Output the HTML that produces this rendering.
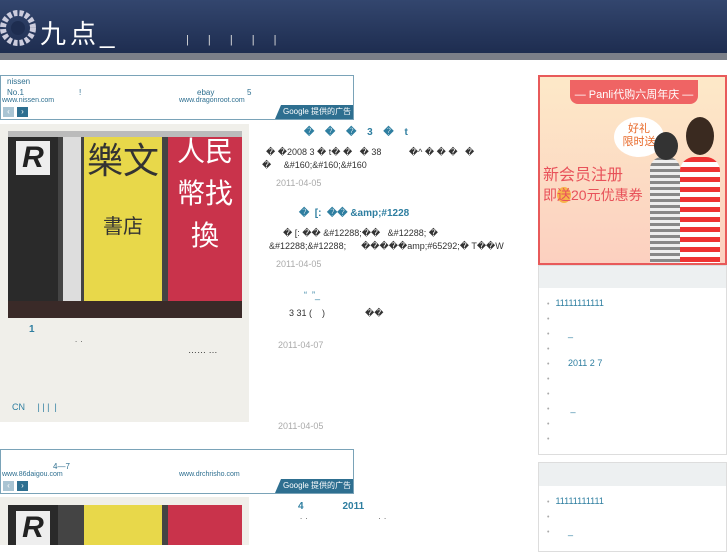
<!DOCTYPE html>
<html><head><meta charset="utf-8"><style>
*{margin:0;padding:0;box-sizing:border-box}
body{width:727px;height:545px;overflow:hidden;background:#fff;font-family:"Liberation Sans","Noto Sans CJK SC",sans-serif;font-size:9px;color:#333;position:relative}
.a{position:absolute}
.hdr{left:0;top:0;width:727px;height:53px;background:linear-gradient(#33466e,#1e2d50)}
.strip{left:0;top:53px;width:727px;height:7px;background:#7b7f88}
.ad{left:0;width:354px;height:45px;border:1px solid #7aa3b8;background:#fff}
.ad span{position:absolute;font-size:8px;color:#2e6f90}
.g{position:absolute;right:0;bottom:0;width:78px;height:14px;background:#2e6f90;color:#fff;font-size:8px;padding-left:8px;line-height:14px;white-space:nowrap;overflow:hidden;clip-path:polygon(6px 0,100% 0,100% 100%,0 100%)}
.nb{position:absolute;bottom:2px;width:11px;height:10px;font-size:8px;line-height:10px;text-align:center;color:#fff}
.box{left:0;width:249px;background:#f0efea}
.photo{left:8px;width:234px;background:#444;overflow:hidden}
.t{color:#2e7ea0;font-weight:bold;font-size:10px}
.d{color:#aaa;font-size:9px}
.side{left:538px;width:189px;border:1px solid #ddd;background:#fff}
.sh{height:22px;background:#edf0f1}
.li{position:absolute;left:8px;font-size:9px;color:#2e7ea0}
.li:before{content:"•";color:#aaa;margin-right:6px;font-size:7px}
</style></head><body>
<div class="a hdr"></div>
<div class="a strip"></div>
<svg class="a" style="left:0;top:10px" width="36" height="36"><circle cx="18" cy="18" r="15" fill="none" stroke="#ccd" stroke-width="6" stroke-dasharray="4 2"/><circle cx="18" cy="18" r="7" fill="#1e2d50"/></svg>
<div class="a" style="left:40px;top:14px;color:#fff;font-size:26px;letter-spacing:4px;font-weight:normal">九点_</div>
<div class="a" style="left:186px;top:34px;color:#ddd;font-size:11px;word-spacing:16px">| | | | |</div>

<div class="a ad" style="top:75px">
<span style="left:6px;top:1px">nissen</span><span style="left:6px;top:12px">No.1</span><span style="left:78px;top:12px">!</span><span style="left:196px;top:12px">ebay</span><span style="left:246px;top:12px">5</span>
<span style="left:1px;top:21px;font-size:7px">www.nissen.com</span><span style="left:178px;top:21px;font-size:7px">www.dragonroot.com</span>
<div class="nb" style="left:2px;background:#a9c4d3">‹</div><div class="nb" style="left:16px;background:#2e6f90">›</div>
<div class="g">Google 提供的广告</div></div>

<div class="a box" style="top:124px;height:298px"></div>
<div class="a photo" style="top:131px;height:187px">
<div class="a" style="left:0;top:0;width:50px;height:187px;background:#2a2a2a"></div>
<div class="a" style="left:8px;top:10px;width:34px;height:34px;background:#eee;color:#222;font-size:30px;font-weight:bold;font-style:italic;text-align:center">R</div>
<div class="a" style="left:55px;top:0;width:18px;height:187px;background:#ddd"></div>
<div class="a" style="left:76px;top:0;width:78px;height:187px;background:#e8d84a;color:#333;font-size:36px;text-align:center;line-height:60px">樂文<br><span style="font-size:20px">書店</span></div>
<div class="a" style="left:160px;top:0;width:74px;height:187px;background:#c9334b;color:#fff;font-size:28px;text-align:center;line-height:42px">人民<br>幣找換</div>
<div class="a" style="left:0;top:0;width:234px;height:6px;background:#bbb"></div>
<div class="a" style="left:0;top:170px;width:234px;height:17px;background:#3a2a28"></div>
</div>
<div class="a t" style="left:29px;top:324px">1</div>
<div class="a" style="left:75px;top:340px">˙ ˙</div>
<div class="a" style="left:188px;top:345px">…… …</div>
<div class="a" style="left:12px;top:402px;color:#2e7ea0">CN &nbsp;&nbsp;&nbsp; | | | &nbsp;|</div>

<div class="a t" style="left:304px;top:127px;word-spacing:8px">� � � 3 � t</div>
<div class="a" style="left:266px;top:147px">� �2008 3 � t� � &nbsp; � 38 &nbsp;&nbsp;&nbsp;&nbsp;&nbsp;&nbsp;&nbsp;&nbsp;&nbsp; �^ � � � &nbsp; �</div>
<div class="a" style="left:262px;top:160px">� &nbsp;&nbsp;&nbsp;&nbsp;&amp;#160;&amp;#160;&amp;#160</div>
<div class="a d" style="left:276px;top:178px">2011-04-05</div>
<div class="a t" style="left:299px;top:208px">� &nbsp;[: &nbsp;�� &amp;amp;#1228</div>
<div class="a" style="left:283px;top:228px">� [: �� &amp;#12288;�� &nbsp; &amp;#12288; �</div>
<div class="a" style="left:269px;top:241px">&amp;#12288;&amp;#12288; &nbsp;&nbsp;&nbsp;&nbsp; �����amp;#65292;� T��W</div>
<div class="a d" style="left:276px;top:259px">2011-04-05</div>
<div class="a" style="left:304px;top:290px;color:#2e7ea0">“ &nbsp;”_</div>
<div class="a" style="left:289px;top:308px">3 31 ( &nbsp;&nbsp; ) &nbsp;&nbsp;&nbsp;&nbsp;&nbsp;&nbsp;&nbsp;&nbsp;&nbsp;&nbsp;&nbsp;&nbsp;&nbsp;&nbsp; ��</div>
<div class="a d" style="left:278px;top:340px">2011-04-07</div>
<div class="a d" style="left:278px;top:421px">2011-04-05</div>

<div class="a ad" style="top:449px">
<span style="left:52px;top:12px">4—7</span>
<span style="left:1px;top:21px;font-size:7px">www.86daigou.com</span><span style="left:178px;top:21px;font-size:7px">www.drchrisho.com</span>
<div class="nb" style="left:2px;background:#a9c4d3">‹</div><div class="nb" style="left:16px;background:#2e6f90">›</div>
<div class="g">Google 提供的广告</div></div>

<div class="a box" style="top:497px;height:48px"></div>
<div class="a photo" style="top:505px;height:40px">
<div class="a" style="left:0;top:0;width:50px;height:40px;background:#2a2a2a"></div>
<div class="a" style="left:8px;top:6px;width:34px;height:34px;background:#eee;color:#222;font-size:30px;font-weight:bold;font-style:italic;text-align:center">R</div>
<div class="a" style="left:76px;top:0;width:78px;height:40px;background:#e8d84a"></div>
<div class="a" style="left:160px;top:0;width:74px;height:40px;background:#c9334b"></div>
</div>
<div class="a t" style="left:298px;top:501px">4 &nbsp;&nbsp;&nbsp;&nbsp;&nbsp;&nbsp;&nbsp;&nbsp;&nbsp;&nbsp;&nbsp;&nbsp; 2011</div>
<div class="a" style="left:300px;top:517px">˙ ˙ &nbsp;&nbsp;&nbsp;&nbsp;&nbsp;&nbsp;&nbsp;&nbsp;&nbsp;&nbsp;&nbsp;&nbsp;&nbsp;&nbsp;&nbsp;&nbsp;&nbsp;&nbsp;&nbsp;&nbsp;&nbsp;&nbsp;&nbsp;&nbsp;&nbsp;&nbsp; ˙ ˙</div>

<div class="a" style="left:538px;top:75px;width:189px;height:190px;border:2px solid #e85a5a;background:linear-gradient(#fde9c8,#fcd0c0);overflow:hidden">
<div class="a" style="left:30px;top:3px;width:128px;height:24px;background:#ef6464;border-radius:0 0 8px 8px;color:#fff;font-size:11px;text-align:center;line-height:30px">— Panli代购六周年庆 —</div>
<div class="a" style="left:74px;top:40px;width:50px;height:40px;background:#fff;border-radius:50%;color:#e86a2a;font-size:11px;text-align:center;line-height:13px;padding-top:6px">好礼<br>限时送</div>
<div class="a" style="left:3px;top:84px;color:#e8525a;font-size:16px">新会员注册</div>
<div class="a" style="left:3px;top:108px;color:#e8525a;font-size:14px">即<span style="background:#f7b44a;border-radius:50%">送</span>20元优惠券</div>
<div class="a" style="left:110px;top:80px;width:30px;height:110px;background:repeating-linear-gradient(#888 0 3px,#eee 3px 6px);border-radius:12px 12px 0 0"></div>
<div class="a" style="left:114px;top:55px;width:24px;height:28px;background:#333;border-radius:50%"></div>
<div class="a" style="left:140px;top:80px;width:40px;height:110px;background:repeating-linear-gradient(#e33 0 5px,#fff 5px 10px);border-radius:14px 14px 0 0"></div>
<div class="a" style="left:146px;top:40px;width:28px;height:38px;background:#3a2a20;border-radius:50%"></div>
</div>

<div class="a side" style="top:265px;height:190px"><div class="sh"></div>
<div class="li" style="top:32px">11111111111</div>
<div class="li" style="top:47px"></div>
<div class="li" style="top:62px">&nbsp;&nbsp;&nbsp;&nbsp; _</div>
<div class="li" style="top:77px"></div>
<div class="li" style="top:92px">&nbsp;&nbsp;&nbsp;&nbsp; 2011 2 7</div>
<div class="li" style="top:107px"></div>
<div class="li" style="top:122px"></div>
<div class="li" style="top:137px">&nbsp;&nbsp;&nbsp;&nbsp;&nbsp; _</div>
<div class="li" style="top:152px"></div>
<div class="li" style="top:167px"></div>
</div>
<div class="a side" style="top:462px;height:90px"><div class="sh" style="height:23px"></div>
<div class="li" style="top:33px">11111111111</div>
<div class="li" style="top:48px"></div>
<div class="li" style="top:63px">&nbsp;&nbsp;&nbsp;&nbsp; _</div>
</div>
</body></html>
